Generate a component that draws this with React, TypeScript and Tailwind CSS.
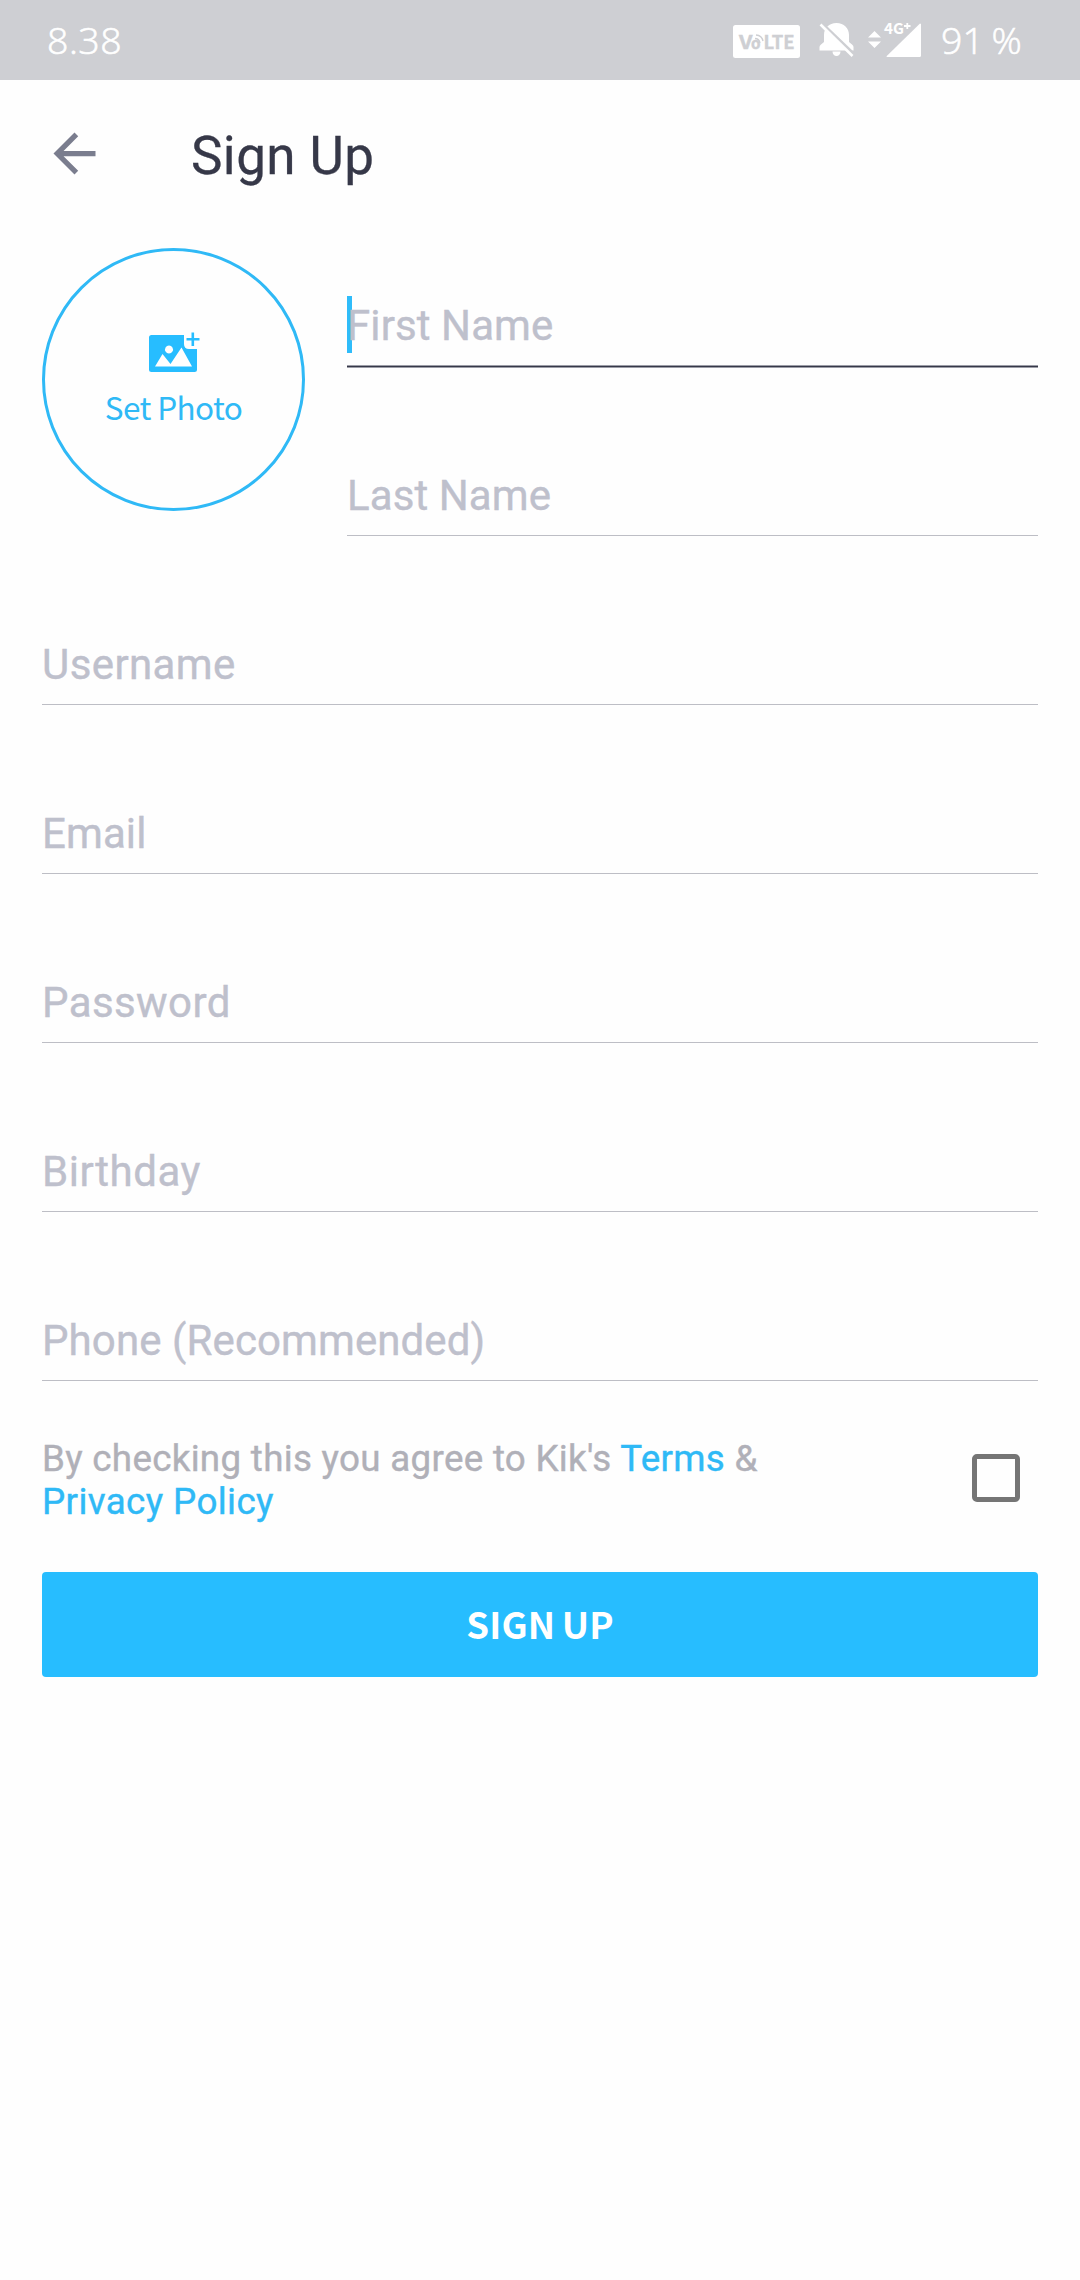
import React from "react";

function VolteBadge() {
  return (
    <svg width="67" height="33" viewBox="0 0 67 33" className="shrink-0">
      <rect width="67" height="33" rx="2.5" fill="#fff" />
      <g fill="#cecfd3" stroke="#cecfd3" strokeWidth="0.4" fontFamily="'Noto Sans CJK SC', sans-serif" fontWeight="700">
        <text x="6" y="24" fontSize="19" textLength="13.5" lengthAdjust="spacingAndGlyphs">V</text>
        <text x="18" y="24.3" fontSize="15" textLength="9.5" lengthAdjust="spacingAndGlyphs">o</text>
        <text x="30.5" y="24" fontSize="19" textLength="31" lengthAdjust="spacingAndGlyphs">LTE</text>
      </g>
      <g fill="none" stroke="#cecfd3" strokeWidth="1.4">
        <path d="M22 13.5q4 0 5 4.500M23 10q6 .5 7 6" />
      </g>
    </svg>
  );
}

function BellOff() {
  return (
    <svg width="36" height="36" viewBox="0 0 36 36" className="shrink-0">
      <path
        fill="#fff"
        d="M.5 28.500v-3.500q0-1.500 1.500-2.500l3-2.500V13C5 6 10 1 17.500 1S30 6 30 13v7l3 2.500q1.500 1 1.500 2.500v3.500zM13.500 29.500h8a4 4.500 0 0 1-8 0z"
      />
      <path d="M1.500 0L36 33" stroke="#cecfd3" strokeWidth="3" />
      <path d="M1.500 2.500L33.500 34" stroke="#fff" strokeWidth="2.600" />
    </svg>
  );
}

function Signal() {
  return (
    <svg width="54" height="44" viewBox="0 -8 54 44" className="shrink-0">
      <path fill="#fff" d="M0 15.500L6.500 9L13 15.500zM0 19.500h13L6.500 26z" />
      <path fill="#fff" d="M53 2v31.500q0 1.500-1.500 1.500H19q-1.200 0 0-1.200L52 1.500z" />
      <g fill="#fff" stroke="#cecfd3" strokeWidth="2" paintOrder="stroke" fontFamily="'Noto Sans CJK SC', sans-serif" fontWeight="700">
        <text x="16" y="12" fontSize="15" textLength="20" lengthAdjust="spacingAndGlyphs">4G</text>
      </g>
      <path d="M36 4h6.500M39.300 1v6" stroke="#fff" strokeWidth="1.800" />
    </svg>
  );
}

function StatusBar() {
  return (
    <header className="flex h-20 items-start bg-[#cecfd3] pl-[47px] font-['Open_Sans','Noto_Sans',sans-serif] text-[37.5px] font-light leading-[80px] text-white [-webkit-text-stroke:0.6px_#fff]">
      <span className="tracking-[0.5px]">8.38</span>
      <div className="ml-auto flex w-[347px] items-start">
        <div className="mt-[25px]"><VolteBadge /></div>
        <div className="ml-[19px] mt-[22px]"><BellOff /></div>
        <div className="ml-[13px] mt-[14px]"><Signal /></div>
        <span className="ml-[19px] whitespace-nowrap [word-spacing:-2px]">91 %</span>
      </div>
    </header>
  );
}

function ImagePlus() {
  return (
    <svg width="51" height="42" viewBox="0 0 51 42">
      <path
        fill="#27bdff"
        fillRule="evenodd"
        d="M2.500 3H35v9q0 5 5 5h8v20.500q0 2.500-2.500 2.500h-43Q0 40 0 37.500v-32Q0 3 2.500 3zM6 34.500h37L32.500 15.500L21.500 32L13.500 22zM20 13.500a4 4 0 1 0 .01 0z"
      />
      <path d="M37.500 7.300h13M43.800 .5v13.500" stroke="#27bdff" strokeWidth="2.600" />
    </svg>
  );
}

type FieldProps = { label: string; focused?: boolean; tracking?: string };

function Field({ label, focused = false, tracking = "tracking-[0.4px]" }: FieldProps) {
  return (
    <div className="flex h-[169px] flex-col justify-end">
      <div className="relative mb-[11px] text-[42px] leading-[56px] text-[#bec0cc] [-webkit-text-stroke:0.4px_#bec0cc]">
        {focused && <span className="absolute bottom-[1px] left-0 h-[57px] w-[5px] bg-[#2fbcfa]" />}
        <span className={"relative " + tracking}>{label}</span>
      </div>
      {focused ? (
        <div className="-mb-px h-[3px] border-y border-[#9c9da7] bg-[#363848]" />
      ) : (
        <div className="h-px bg-[#bdbec5]" />
      )}
    </div>
  );
}

export default function App() {
  return (
    <div className="min-h-[2280px] w-[1080px] bg-[#fefefe] font-['Roboto',sans-serif]">
      <StatusBar />
      <div className="flex h-[118px] items-start pl-[43px]">
        <svg width="63" height="63" viewBox="0 0 24 24" className="mt-[42px] shrink-0">
          <path fill="#7a7d8e" d="M20 11H7.830l5.590-5.590L12 4l-8 8 8 8 1.410-1.410L7.830 13H20v-2z" />
        </svg>
        <h1 className="ml-[85px] mt-[43px] text-[53px] font-normal leading-[66px] tracking-[0.4px] text-[#363848] [-webkit-text-stroke:0.3px_#363848]">Sign Up</h1>
      </div>
      <main className="px-[42px]">
        <div className="flex">
          <div className="mt-[50px] flex h-[263px] w-[263px] shrink-0 flex-col items-center rounded-full border-[3px] border-[#2fb9f6] pt-[81px]">
            <div className="ml-[2px]"><ImagePlus /></div>
            <span className="mt-[9px] font-['Noto_Sans_CJK_SC',sans-serif] text-[31.5px] leading-[46px] tracking-[-0.6px] text-[#2fb9f6]">Set Photo</span>
          </div>
          <div className="ml-[42px] flex-1">
            <Field label="First Name" focused tracking="tracking-[0.1px]" />
            <Field label="Last Name" tracking="tracking-[0.1px]" />
          </div>
        </div>
        <Field label="Username" />
        <Field label="Email" tracking="tracking-[0.1px]" />
        <Field label="Password" />
        <Field label="Birthday" tracking="tracking-[0.55px]" />
        <Field label="Phone (Recommended)" tracking="tracking-[0.1px]" />
        <div className="flex items-start pt-[56px]">
          <p className="w-[800px] text-[36.75px] leading-[43px] tracking-[0.3px] text-[#b0b0b8] [-webkit-text-stroke:0.4px_currentColor]">
            By checking this you agree to Kik's <span className="text-[#2fb9f6]">Terms</span> &amp;
            <br />
            <span className="tracking-[0.4px] text-[#2fb9f6]">Privacy Policy</span>
          </p>
          <div className="ml-auto mr-[18px] mt-[17px] h-[48px] w-[48px] rounded-[5px] border-[5px] border-[#757575]" />
        </div>
        <button className="mt-[49px] block h-[105px] w-full rounded-[4px] bg-[#27bdff] font-['Noto_Sans_CJK_SC',sans-serif] text-[36.5px] font-bold text-white">
          <span className="block h-[105px] leading-[103px] tracking-[0.2px] [word-spacing:-2px]">SIGN UP</span>
        </button>
      </main>
    </div>
  );
}
